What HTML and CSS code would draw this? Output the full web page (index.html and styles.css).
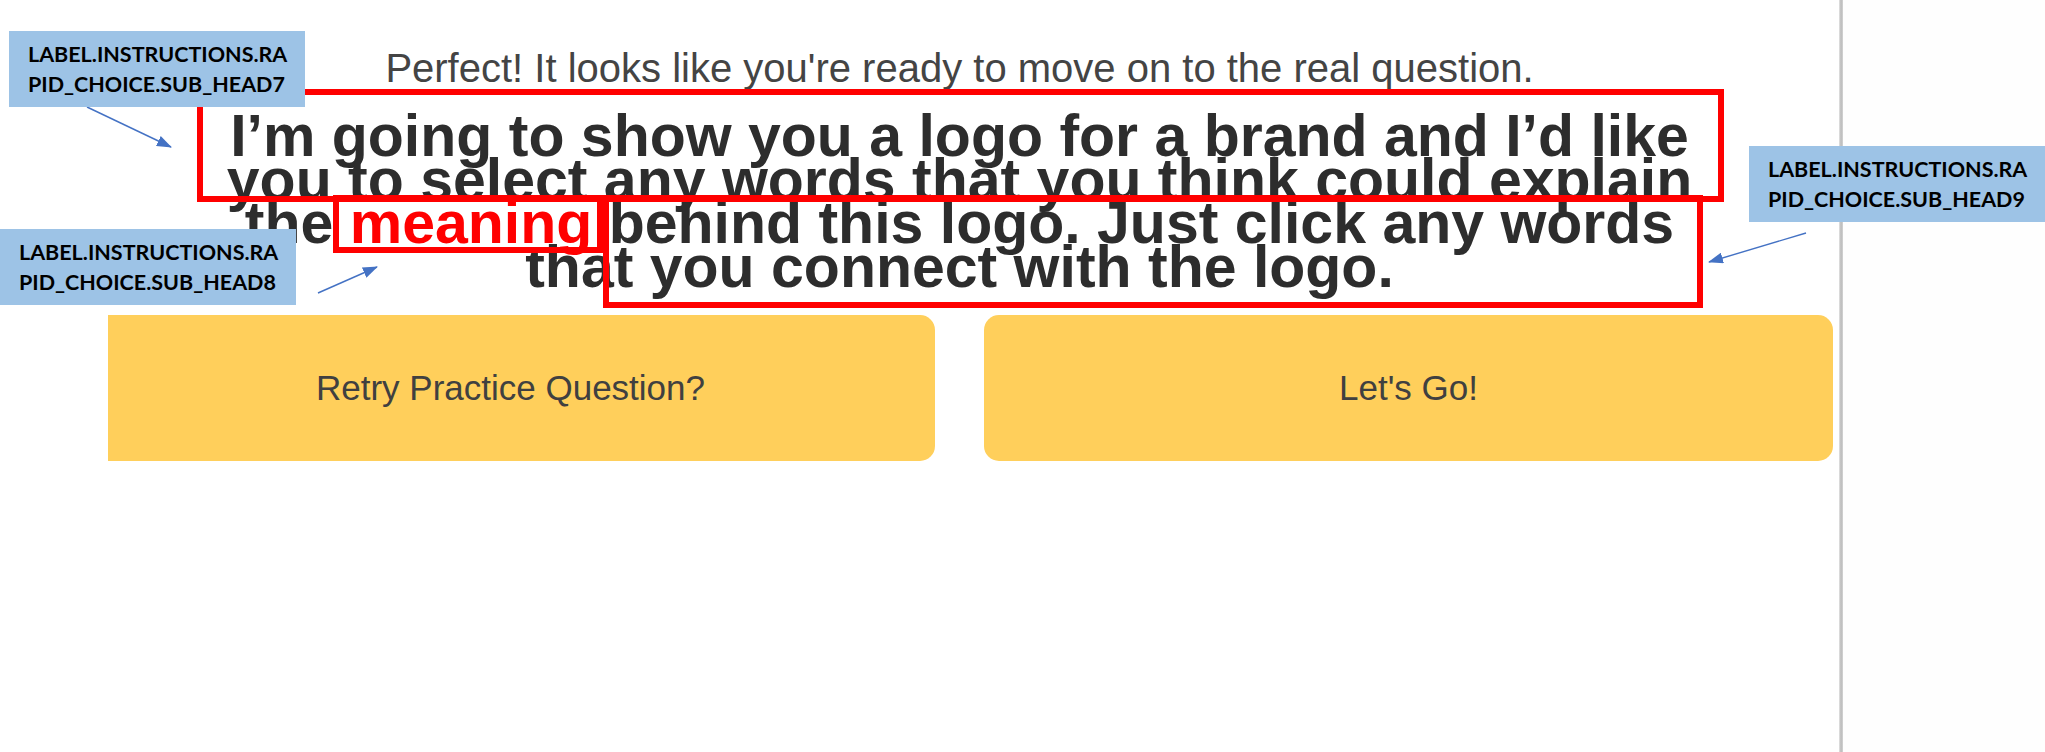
FILE: index.html
```html
<!DOCTYPE html>
<html>
  <head>
    <title>Rapid choice instructions</title>
    <meta charset="UTF-8">
    <link rel="stylesheet" href="styles.css">
  </head>
  <body>
    <div class="window">
      <main class="app">
        <div class="viewport">
          <div class="content">
            <p class="intro">Perfect! It looks like you're ready to move on to the real question.</p>
            <h1 class="heading">I’m going to show you a logo for a brand and I’d like you to select any words that you think could explain the <span class="keyword">meaning</span> behind this logo. Just click any words that you connect with the logo.</h1>
            <div class="actions">
              <button class="btn-choice">Retry Practice Question?</button>
              <button class="btn-choice">Let's Go!</button>
            </div>
          </div>
        </div>
      </main>
      <div class="divider"></div>
      <div class="side"></div>
    </div>

    <!-- review annotations -->
    <div class="mark mark-head7"></div>
    <div class="mark mark-head8"></div>
    <div class="mark mark-head9"></div>

    <svg class="arrows" width="2045" height="752" viewBox="0 0 2045 752">
      <defs>
        <marker id="tip" markerUnits="userSpaceOnUse" markerWidth="15" markerHeight="11" refX="14" refY="5.5" orient="auto">
          <path d="M0,0 L15,5.5 L0,11 z" fill="#4472c4"/>
        </marker>
      </defs>
      <line x1="87" y1="107" x2="171" y2="147" marker-end="url(#tip)"/>
      <line x1="318" y1="293" x2="377" y2="267" marker-end="url(#tip)"/>
      <line x1="1806" y1="233" x2="1709" y2="262" marker-end="url(#tip)"/>
    </svg>

    <div class="note note-head7">LABEL.INSTRUCTIONS.RA<br>PID_CHOICE.SUB_HEAD7</div>
    <div class="note note-head8">LABEL.INSTRUCTIONS.RA<br>PID_CHOICE.SUB_HEAD8</div>
    <div class="note note-head9">LABEL.INSTRUCTIONS.RA<br>PID_CHOICE.SUB_HEAD9</div>
  </body>
</html>
```

FILE: styles.css
```css
body {
  margin: 0;
  width: 2045px;
  height: 752px;
  overflow: hidden;
  position: relative;
  background: #fff;
  font-family: "Liberation Sans", Arial, sans-serif;
}

.window {
  display: flex;
  height: 752px;
}

.app {
  flex: none;
  width: 1839px;
  overflow: hidden;
}

/* page is scrolled a little to the right, so the left edge is cut */
.viewport {
  margin-left: 108px;
  overflow: hidden;
  height: 100%;
}

.content {
  width: 1747px;
  margin-left: -22px;
  padding-top: 44px;
}

.intro {
  margin: 0;
  font-size: 40px;
  line-height: 48px;
  color: #444;
  text-align: center;
}

.heading {
  max-width: 1500px;
  margin: 23px auto 0;
  font-size: 59px;
  line-height: 43.5px;
  font-weight: bold;
  color: #2d2d2d;
  text-align: center;
}

.keyword {
  color: #ff0000;
}

.actions {
  display: flex;
  gap: 49px;
  margin-top: 26px;
}

.btn-choice {
  flex: 1;
  height: 146px;
  border: none;
  border-radius: 15px;
  background: #ffcf5b;
  color: #404040;
  font-family: "Liberation Sans", Arial, sans-serif;
  font-size: 35px;
  padding: 0;
}

.divider {
  flex: none;
  width: 4px;
  background: linear-gradient(to right, #e4e4e4, #bababa 50%, #d4d4d4);
}

.side {
  flex: 1;
  background: #fefefe;
}

/* annotations */
.mark {
  position: absolute;
  box-sizing: border-box;
  border: 6px solid #ff0000;
}

.mark-head7 {
  left: 197px;
  top: 89px;
  width: 1527px;
  height: 113px;
}

.mark-head8 {
  left: 333px;
  top: 195px;
  width: 270px;
  height: 58px;
}

.mark-head9 {
  left: 603px;
  top: 195px;
  width: 1100px;
  height: 113px;
}

.arrows {
  position: absolute;
  left: 0;
  top: 0;
  pointer-events: none;
}

.arrows line {
  stroke: #4472c4;
  stroke-width: 1.4;
}

.note {
  position: absolute;
  box-sizing: border-box;
  width: 296px;
  height: 76px;
  padding: 8px 0 0 19px;
  background: #9dc3e6;
  color: #000;
  font-family: Lato, "Open Sans", sans-serif;
  font-weight: bold;
  font-size: 21.5px;
  line-height: 30px;
  white-space: nowrap;
}

.note-head7 {
  left: 9px;
  top: 31px;
}

.note-head8 {
  left: 0;
  top: 229px;
}

.note-head9 {
  left: 1749px;
  top: 146px;
}
```
